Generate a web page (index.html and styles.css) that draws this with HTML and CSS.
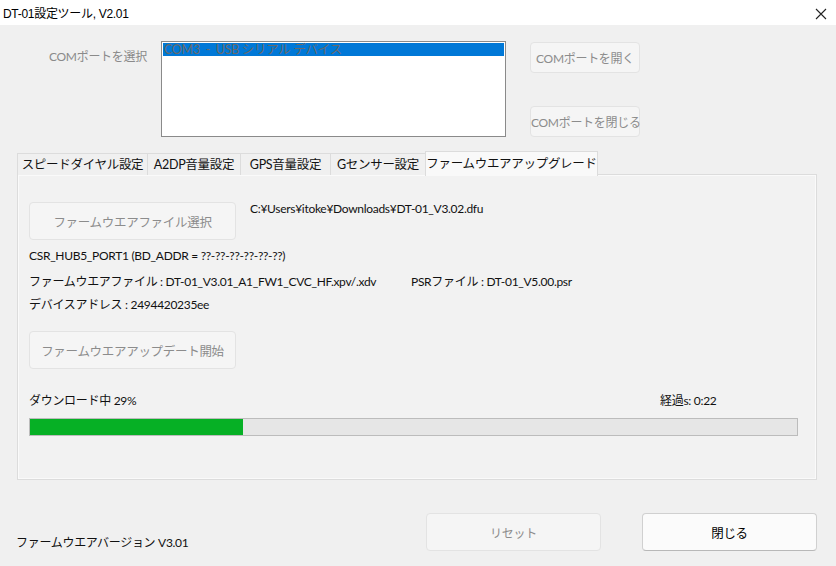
FILE: index.html
```html
<!DOCTYPE html>
<html lang="ja">
<head>
<meta charset="utf-8">
<link rel="stylesheet" href="styles.css">
</head>
<body>
<div class="window">
  <div class="titlebar">
    <span class="title">DT-01設定ツール, V2.01</span>
    <svg class="close" width="12" height="12" viewBox="0 0 12 12"><path d="M1 1 L11 11 M11 1 L1 11" stroke="#222" stroke-width="1.1" fill="none"/></svg>
  </div>
  <div class="client">
    <div class="top">
      <div class="port-label">COMポートを選択</div>
      <div class="listbox"><div class="item sel">COM3 &nbsp;- &nbsp;USB シリアル デバイス</div></div>
      <div class="port-buttons">
        <button class="btn disabled small">COMポートを開く</button>
        <button class="btn disabled small">COMポートを閉じる</button>
      </div>
    </div>
    <div class="tabs">
      <div class="tab t1">スピードダイヤル設定</div>
      <div class="tab t2">A2DP音量設定</div>
      <div class="tab t3">GPS音量設定</div>
      <div class="tab t4">Gセンサー設定</div>
      <div class="tab active t5">ファームウエアアップグレード</div>
    </div>
    <div class="panel">
      <div class="row-file">
        <button class="btn disabled big">ファームウエアファイル選択</button>
        <div class="path">C:¥Users¥itoke¥Downloads¥DT-01_V3.02.dfu</div>
      </div>
      <div class="line l1">CSR_HUB5_PORT1 (BD_ADDR = ??-??-??-??-??-??)</div>
      <div class="line l2"><span class="fw">ファームウエアファイル : DT-01_V3.01_A1_FW1_CVC_HF.xpv/.xdv</span><span class="psr">PSRファイル : DT-01_V5.00.psr</span></div>
      <div class="line l3">デバイスアドレス : 2494420235ee</div>
      <button class="btn disabled big upd">ファームウエアアップデート開始</button>
      <div class="status">
        <span class="dl">ダウンロード中 29%</span>
        <span class="elapsed">経過s: 0:22</span>
      </div>
      <div class="progress"><div class="fill" style="width:213px"></div></div>
    </div>
    <div class="bottom">
      <div class="version">ファームウエアバージョン V3.01</div>
      <button class="btn disabled wide reset">リセット</button>
      <button class="btn wide close-btn">閉じる</button>
    </div>
  </div>
</div>
</body>
</html>
```
FILE: styles.css
```css
* { box-sizing: border-box; }
html, body { margin: 0; padding: 0; }
body {
  width: 836px;
  height: 566px;
  overflow: hidden;
  font-family: Lato, "Noto Sans CJK JP", sans-serif;
  font-size: 12px;
  letter-spacing: -0.3px;
  color: #111;
  background: #f0f0f0;
}
.window {
  width: 836px;
  height: 566px;
  display: flex;
  flex-direction: column;
  box-shadow: inset 1px 0 0 #6a6a6a;
}
.titlebar {
  height: 25px;
  background: #fff;
  display: flex;
  align-items: center;
  justify-content: space-between;
  padding: 0 9px 0 3px;
}
.title { font-family: "Liberation Sans", "Noto Sans CJK JP", sans-serif; font-size: 12px; letter-spacing: -0.3px; color: #000; }
.close { margin-top: 2px; }
.client {
  flex: 1;
  background: #f0f0f0;
  display: flex;
  flex-direction: column;
}
.top {
  display: flex;
  padding: 16px 0 0 49px;
  height: 112px;
}
.port-label {
  width: 112px;
  color: #8a8a8a;
  padding-top: 6px;
}
.listbox {
  width: 345px;
  height: 96px;
  background: #fff;
  border: 1px solid #8a8a8a;
  padding: 1px;
}
.item.sel {
  background: #0078d7;
  color: #6a6a6a;
  height: 13px;
  line-height: 13px;
  padding-left: 1px;
  white-space: nowrap;
  font-size: 12.5px;
}
.port-buttons {
  margin-left: 24px;
  display: flex;
  flex-direction: column;
  justify-content: space-between;
  padding-top: 1px;
  height: 96px;
}
.btn {
  font-family: inherit;
  font-size: 12px;
  letter-spacing: -0.3px;
  border-radius: 4px;
  padding: 0;
  background: #fbfbfb;
  border: 1px solid #d0d0d0;
  border-bottom-color: #b8b8b8;
  color: #000;
  white-space: nowrap;
}
.btn.disabled {
  background: #f5f5f5;
  border: 1px solid #e3e3e3;
  color: #8c8c8c;
}
.btn.small { width: 110px; height: 31px; }
.btn.big { width: 207px; height: 38px; font-size: 12.5px; }
.btn.wide { width: 175px; height: 38px; }

.tabs {
  display: flex;
  align-items: flex-end;
  margin: 14px 0 0 17px;
  height: 24px;
  position: relative;
  z-index: 1;
}
.tab {
  height: 22px;
  line-height: 21px;
  border: 1px solid #dcdcdc;
  border-bottom: none;
  border-right: none;
  background: #f0f0f0;
  text-align: center;
  font-size: 12.5px;
  white-space: nowrap;
}
.t1 { width: 130px; }
.t2 { width: 93px; }
.t3 { width: 90px; }
.t4 { width: 95px; }
.tab.active {
  width: 173px;
  height: 25px;
  line-height: 24px;
  background: #f9f9f9;
  border-right: 1px solid #dcdcdc;
  margin-bottom: -1px;
}
.panel {
  margin-left: 17px;
  width: 800px;
  height: 306px;
  border: 1px solid #dcdcdc;
  box-shadow: inset 0 0 0 1px #fafafa;
  background: #f2f2f2;
  padding: 27px 0 0 11px;
  margin-top: -1px;
}
.row-file {
  display: flex;
  align-items: flex-start;
}
.path { margin-left: 14px; line-height: 14px; }
.line { line-height: 20px; white-space: nowrap; }
.l1 { margin-top: 6px; }
.l2 { margin-top: 6px; display: flex; }
.fw { width: 382px; flex-shrink: 0; }
.l3 { margin-top: 3px; }
.upd { margin-top: 16px; display: block; }
.status {
  margin-top: 22px;
  display: flex;
  line-height: 20px;
}
.dl { width: 631px; }
.progress {
  margin-top: 7px;
  width: 769px;
  height: 18px;
  border: 1px solid #bcbcbc;
  background: #e6e6e6;
}
.fill { height: 100%; background: #06b025; }
.bottom {
  display: flex;
  align-items: flex-start;
  padding: 33px 0 0 16px;
}
.version { width: 410px; margin-top: 20px; }
.close-btn { margin-left: 41px; font-size: 12.5px; }
```
